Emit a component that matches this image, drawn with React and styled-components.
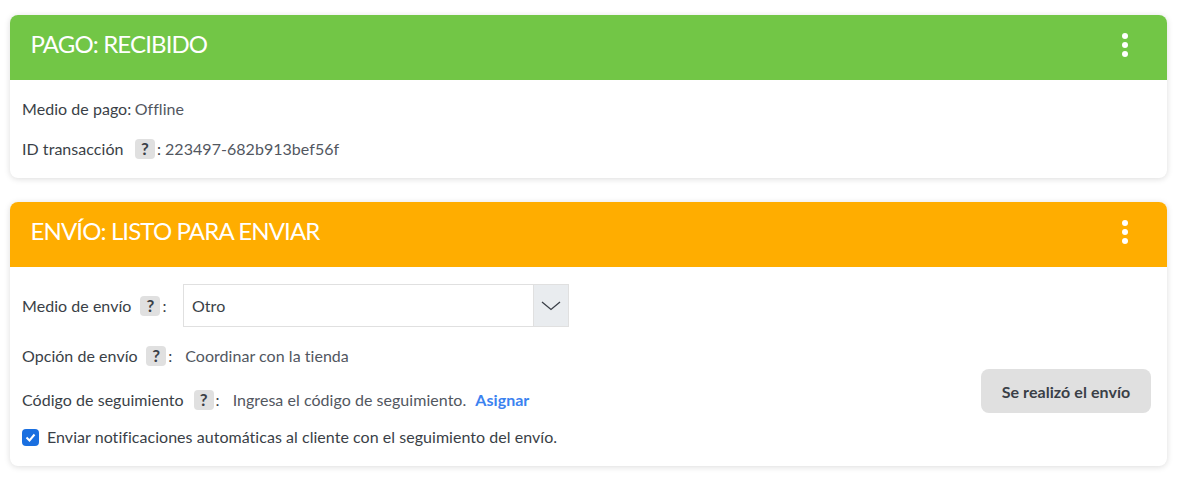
import React from "react";
import styled, { createGlobalStyle } from "styled-components";

const GlobalStyle = createGlobalStyle`
  html, body {
    margin: 0;
    background: #fff;
    font-family: Lato, "Open Sans", sans-serif;
    font-size: 16px;
    letter-spacing: 0.04px;
    color: #3a3f47;
  }
`;

const Page = styled.div`
  display: flex;
  flex-direction: column;
  gap: 24px;
  padding: 15px 17px 13px 10px;
`;

const Card = styled.section`
  background: #fff;
  border-radius: 8px;
  box-shadow: 0 1px 6px rgba(0, 0, 0, 0.14);
  overflow: hidden;
`;

const CardHeader = styled.header`
  display: flex;
  align-items: center;
  justify-content: space-between;
  box-sizing: border-box;
  height: 65px;
  padding: 0 39px 5px 20.5px;
  background: ${(p) => p.$color};
`;

const Title = styled.h2`
  margin: 0 0 4px;
  font-size: 24px;
  font-weight: 400;
  color: #fff;
  letter-spacing: -0.87px;
`;

const Dots = styled.button`
  display: flex;
  flex-direction: column;
  gap: 3px;
  padding: 0;
  border: 0;
  background: none;

  span {
    width: 6px;
    height: 6px;
    border-radius: 50%;
    background: #fff;
  }
`;

const PayBody = styled.div`
  display: flex;
  flex-direction: column;
  gap: 20px;
  padding: 19px 12px 19px;
`;

const Row = styled.div`
  display: flex;
  align-items: center;
  height: 20px;
  line-height: 20px;
  white-space: nowrap;
`;

const Label = styled.span`
  color: #3a3f47;
`;

const Value = styled.span`
  color: #52575f;
  margin-left: ${(p) => p.$gap || 0}px;
`;

const Help = styled.span`
  display: inline-flex;
  align-items: center;
  justify-content: center;
  width: 20px;
  height: 20px;
  margin: 0 2px 0 ${(p) => p.$gap || 10}px;
  border-radius: 4px;
  background: #e0e0e0;
  font-weight: 700;
  font-size: 17px;
  color: #3a3f47;
`;

const ShipBody = styled.div`
  display: flex;
  justify-content: space-between;
  padding: 17px 16px 19px 12px;
`;

const ShipFields = styled.div`
  display: flex;
  flex-direction: column;
`;

const SelectRow = styled(Row)`
  height: 43px;
  margin-bottom: 19px;
`;

const SelectBox = styled.div`
  display: flex;
  width: 386px;
  height: 43px;
  margin-left: 16.5px;
  box-sizing: border-box;
  border: 1px solid #e0e0e0;
`;

const SelectValue = styled.span`
  flex: 1;
  padding-left: 8px;
  line-height: 42px;
  font-size: 16px;
  color: #3a3f47;
`;

const SelectArrow = styled.span`
  display: flex;
  align-items: center;
  justify-content: center;
  width: 34px;
  background: #e9ecef;
  border-left: 1px solid #e0e0e0;
`;

const TrackingRow = styled(Row)`
  margin-top: 24px;
`;

const Link = styled.a`
  margin-left: 9px;
  font-weight: 700;
  color: #3b82f0;
`;

const CheckRow = styled(Row)`
  margin-top: 17px;
`;

const Check = styled.span`
  display: inline-flex;
  align-items: center;
  justify-content: center;
  width: 17px;
  height: 17px;
  margin-right: 8px;
  border-radius: 4px;
  background: #1a6fe0;
`;

const ShipButton = styled.button`
  align-self: flex-end;
  width: 170px;
  height: 44px;
  margin-bottom: 34px;
  border: 0;
  border-radius: 8px;
  background: #e0e0e0;
  font-family: inherit;
  font-size: 16px;
  font-weight: 700;
  letter-spacing: 0.06px;
  color: #3a3f47;
`;

const Menu = () => (
  <Dots aria-label="Opciones">
    <span />
    <span />
    <span />
  </Dots>
);

export default function App() {
  return (
    <>
      <GlobalStyle />
      <Page>
        <Card>
          <CardHeader $color="#72c646">
            <Title>PAGO: RECIBIDO</Title>
            <Menu />
          </CardHeader>
          <PayBody>
            <Row>
              <Label>Medio de pago:</Label>
              <Value $gap={3.5}>Offline</Value>
            </Row>
            <Row>
              <Label>ID transacción</Label>
              <Help $gap={11.5}>?</Help>
              <Label>:</Label>
              <Value $gap={4}>223497-682b913bef56f</Value>
            </Row>
          </PayBody>
        </Card>
        <Card>
          <CardHeader $color="#ffad00">
            <Title>ENVÍO: LISTO PARA ENVIAR</Title>
            <Menu />
          </CardHeader>
          <ShipBody>
            <ShipFields>
              <SelectRow>
                <Label>Medio de envío</Label>
                <Help $gap={9}>?</Help>
                <Label>:</Label>
                <SelectBox>
                  <SelectValue>Otro</SelectValue>
                  <SelectArrow>
                    <svg width="20" height="10" viewBox="0 0 20 10" fill="none">
                      <path d="M1 1l9 7.5 9-7.5" stroke="#3a3f47" strokeWidth="1.3" />
                    </svg>
                  </SelectArrow>
                </SelectBox>
              </SelectRow>
              <Row>
                <Label>Opción de envío</Label>
                <Help $gap={8.5}>?</Help>
                <Label>:</Label>
                <Value $gap={13}>Coordinar con la tienda</Value>
              </Row>
              <TrackingRow>
                <Label>Código de seguimiento</Label>
                <Help $gap={10}>?</Help>
                <Label>:</Label>
                <Value $gap={13}>Ingresa el código de seguimiento.</Value>
                <Link>Asignar</Link>
              </TrackingRow>
              <CheckRow>
                <Check>
                  <svg width="11" height="9" viewBox="0 0 11 9" fill="none">
                    <path d="M1.5 4.5l3 3 5-6" stroke="#fff" strokeWidth="2" />
                  </svg>
                </Check>
                <Label>Enviar notificaciones automáticas al cliente con el seguimiento del envío.</Label>
              </CheckRow>
            </ShipFields>
            <ShipButton>Se realizó el envío</ShipButton>
          </ShipBody>
        </Card>
      </Page>
    </>
  );
}
